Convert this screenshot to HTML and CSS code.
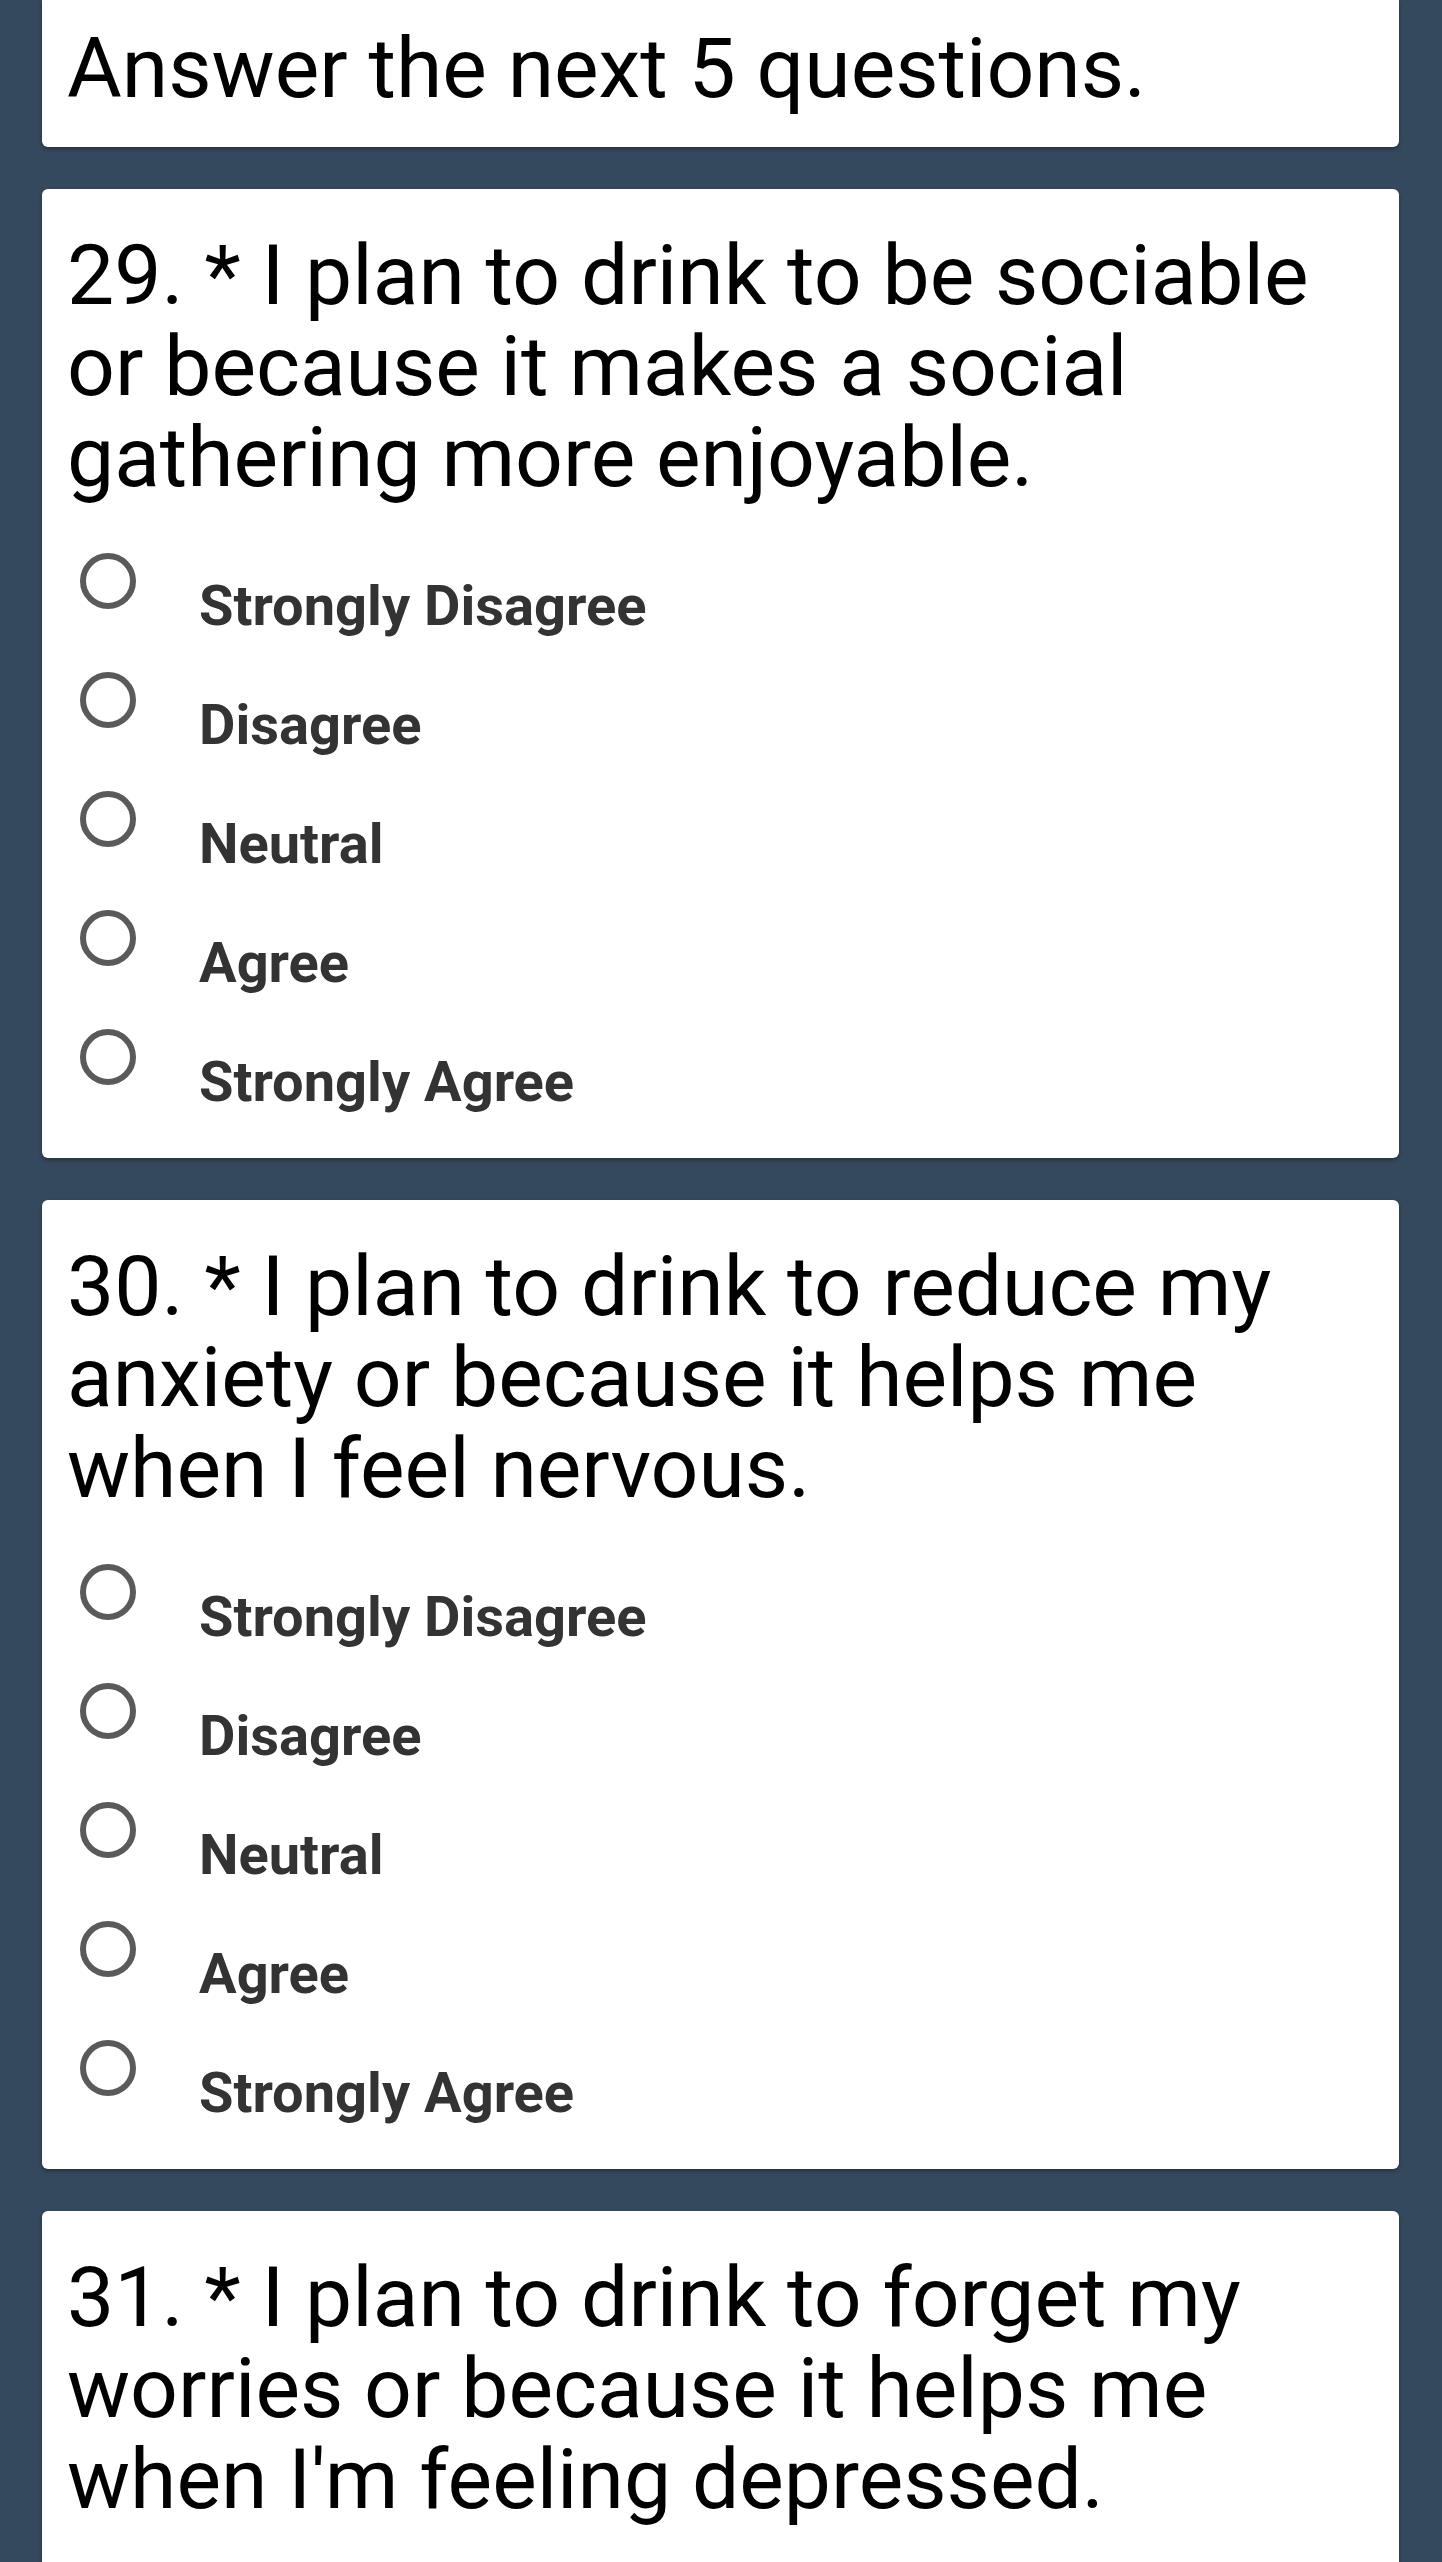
FILE: index.html
```html
<!DOCTYPE html>
<html lang="en">
<head>
<meta charset="utf-8">
<title>Survey</title>
<link rel="stylesheet" href="styles.css">
</head>
<body>
<main class="page">
  <section class="card card-header">
    <p class="question">Answer the next 5 questions.</p>
  </section>

  <section class="card">
    <p class="question">29. * I plan to drink to be sociable or because it makes a social gathering more enjoyable.</p>
    <div class="options">
      <label class="option"><span class="radio"></span><span class="label">Strongly Disagree</span></label>
      <label class="option"><span class="radio"></span><span class="label">Disagree</span></label>
      <label class="option"><span class="radio"></span><span class="label">Neutral</span></label>
      <label class="option"><span class="radio"></span><span class="label">Agree</span></label>
      <label class="option"><span class="radio"></span><span class="label">Strongly Agree</span></label>
    </div>
  </section>

  <section class="card">
    <p class="question">30. * I plan to drink to reduce my anxiety or because it helps me when I feel nervous.</p>
    <div class="options">
      <label class="option"><span class="radio"></span><span class="label">Strongly Disagree</span></label>
      <label class="option"><span class="radio"></span><span class="label">Disagree</span></label>
      <label class="option"><span class="radio"></span><span class="label">Neutral</span></label>
      <label class="option"><span class="radio"></span><span class="label">Agree</span></label>
      <label class="option"><span class="radio"></span><span class="label">Strongly Agree</span></label>
    </div>
  </section>

  <section class="card">
    <p class="question">31. * I plan to drink to forget my worries or because it helps me when I'm feeling depressed.</p>
  </section>
</main>
</body>
</html>
```

FILE: styles.css
```css
html, body {
  margin: 0;
  padding: 0;
  background: #35495e;
}

body {
  font-family: Roboto, "Noto Sans", "Liberation Sans", sans-serif;
  height: 2562px;
  overflow: hidden;
}

.page {
  display: flex;
  flex-direction: column;
  gap: 42px;
  padding: 0 43px 0 42px;
}

.card {
  background: #ffffff;
  border-radius: 6px;
  box-shadow: 0 2px 4px rgba(0, 0, 0, 0.35);
  padding: 41px 25px 10px 25px;
  height: 969px;
  box-sizing: border-box;
  flex: none;
}

.card-header {
  height: auto;
  padding: 23px 25px 33px 25px;
  border-top-left-radius: 0;
  border-top-right-radius: 0;
}

.question {
  margin: 0;
  font-size: 84px;
  line-height: 91px;
  font-weight: 400;
  color: #000000;
}

.options {
  margin-top: 50px;
  display: flex;
  flex-direction: column;
}

.option {
  display: flex;
  align-items: flex-start;
  height: 119px;
}

.radio {
  flex: none;
  width: 56px;
  height: 56px;
  box-sizing: border-box;
  border: 6.5px solid #5a5a5a;
  border-radius: 50%;
  margin-left: 13px;
}

.label {
  margin-left: 63px;
  margin-top: 21px;
  font-size: 56px;
  line-height: 65px;
  font-weight: 700;
  color: #333333;
}
```
